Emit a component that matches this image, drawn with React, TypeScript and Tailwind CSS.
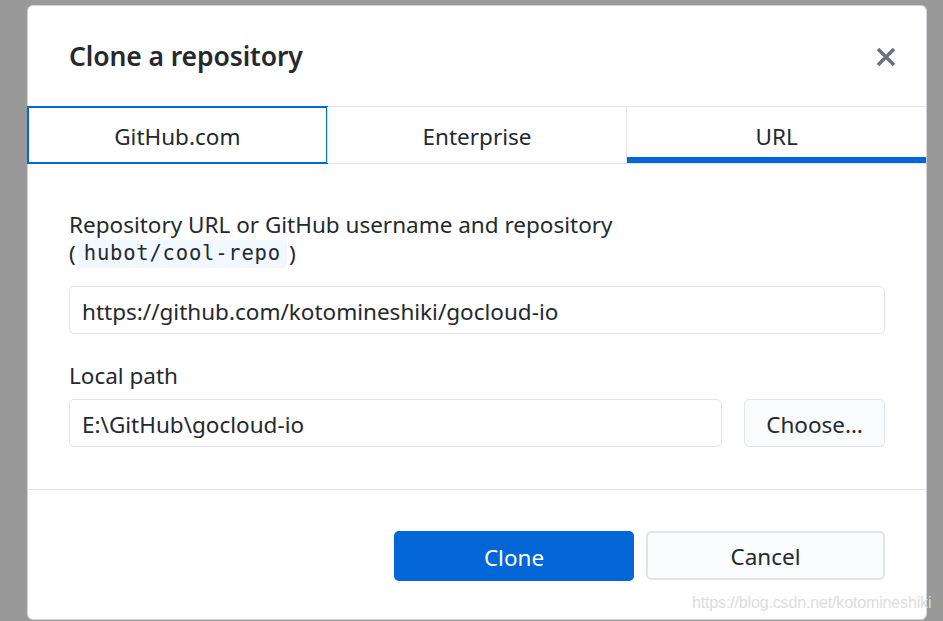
import React from "react";

const font = { fontFamily: '"Noto Sans", "Open Sans", sans-serif' };

function CloseIcon() {
  return (
    <svg width="22" height="22" viewBox="0 0 22 22" aria-hidden="true">
      <path d="M3 3 L19 19 M19 3 L3 19" stroke="#6a737d" strokeWidth="3.6" strokeLinecap="butt" />
    </svg>
  );
}

export default function App() {
  return (
    <div
      className="relative w-[943px] h-[621px] overflow-hidden bg-[#999999] pl-[27px] pt-[5px]"
      style={font}
    >
      <div className="w-[900px] h-[615px] bg-white border border-[#d1d5da] rounded-[6px] flex flex-col text-[#24292e]">
        {/* Header */}
        <div className="h-[100px] flex items-center justify-between pl-[41px] pr-[29px] pt-[2px]">
          <h1 className="text-[26.5px] font-semibold tracking-[-0.1px]">Clone a repository</h1>
          <CloseIcon />
        </div>

        {/* Tabs */}
        <div className="flex h-[58px] border-y border-[#e1e4e8] text-[22.5px]">
          <div className="flex-1 flex items-center justify-center pt-[4px] outline-2 outline-solid outline-[#0366d6] outline-offset-[-1px]">
            GitHub.com
          </div>
          <div className="flex-1 flex items-center justify-center pt-[4px] border-l border-[#e1e4e8]">
            Enterprise
          </div>
          <div className="flex-1 flex flex-col border-l border-[#e1e4e8]">
            <div className="flex-1 flex items-center justify-center pt-[10px]">URL</div>
            <div className="h-[6px] bg-[#0366d6]" />
          </div>
        </div>

        {/* Body */}
        <div className="flex-1 px-[41px] pt-[46px] border-b border-[#e1e4e8] text-[22.5px]">
          <div className="leading-[29px]">
            Repository URL or GitHub username and repository
          </div>
          <div className="leading-[29px] flex items-center">
            <span>(</span>
            <code
              className="mx-[2px] px-[6px] h-[28px] flex items-center bg-[#f1f8ff] rounded-[4px] text-[20.5px] tracking-[0.8px]"
              style={{ fontFamily: '"DejaVu Sans Mono", "Liberation Mono", monospace' }}
            >
              hubot/cool-repo
            </code>
            <span>)</span>
          </div>
          <div className="mt-[18px] h-[48px] border border-[#e1e4e8] rounded-[5px] flex items-center px-[12px] pt-[3px]">
            https://github.com/kotomineshiki/gocloud-io
          </div>
          <div className="mt-[27px] leading-[29px]">Local path</div>
          <div className="mt-[9px] flex gap-[22px]">
            <div className="flex-1 h-[48px] border border-[#e1e4e8] rounded-[5px] flex items-center px-[12px] pt-[3px]">
              E:\GitHub\gocloud-io
            </div>
            <div className="w-[141px] h-[48px] border border-[#e1e4e8] rounded-[5px] bg-[#fafbfc] flex items-center justify-center pt-[3px]">
              Choose…
            </div>
          </div>
        </div>

        {/* Footer */}
        <div className="h-[129px] flex justify-end items-start gap-[12px] pr-[41px] pt-[41px] text-[22.5px]">
          <div className="w-[240px] h-[50px] rounded-[5px] bg-[#0366d6] text-white flex items-center justify-center pt-[3px]">
            Clone
          </div>
          <div className="w-[239px] h-[49px] rounded-[5px] border-2 border-[#e1e4e8] bg-[#fafbfc] flex items-center justify-center pt-[3px]">
            Cancel
          </div>
        </div>
      </div>

      {/* Watermark */}
      <div
        className="absolute left-[692px] top-[591px] text-[16px] text-[#dcdcdc] tracking-[-0.15px]"
        style={{ fontFamily: '"Liberation Sans", Arial, sans-serif' }}
      >
        https://blog.csdn.net/kotomineshiki
      </div>
    </div>
  );
}
